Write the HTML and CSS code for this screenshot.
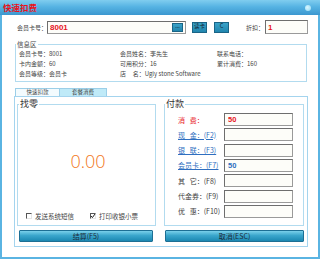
FILE: index.html
```html
<!DOCTYPE html>
<html lang="zh-CN">
<head>
    <meta charset="UTF-8">
    <title>快速扣费</title>
    <link rel="stylesheet" href="styles.css">
</head>
<body>
    <div class="window">
        <div class="titlebar">
            <span class="title">快速扣费</span>
            <span class="close-dot"></span>
        </div>

        <div class="body">
            <!-- card number row -->
            <div class="card-row">
                <span class="card-label">会员卡号：</span>
                <div class="card-input-wrap">
                    <input class="field field-card" value="8001">
                    <button class="btn-mini btn-more">...</button>
                </div>
                <button class="btn-mini btn-read">读卡</button>
                <button class="btn-mini btn-clear">C</button>
                <span class="discount-label">折扣：</span>
                <input class="field field-discount" value="1">
            </div>

            <!-- member info -->
            <fieldset class="info-box">
                <legend>信息区</legend>
                <div class="info-grid">
                    <span>会员卡号：8001</span>
                    <span>会员姓名：李先生</span>
                    <span>联系电话：</span>
                    <span>卡内金额：60</span>
                    <span>可用积分：16</span>
                    <span>累计消费：160</span>
                    <span>会员等级：会员卡</span>
                    <span>店&nbsp;&nbsp;&nbsp;&nbsp;&nbsp;名：Ugly stone Software</span>
                </div>
            </fieldset>

            <div class="tabs">
                <div class="tab">快速扣款</div>
                <div class="tab tab-active">套餐消费</div>
            </div>

            <div class="tab-panel">
                <div class="col col-change">
                    <fieldset class="group change-box">
                        <legend>找零</legend>
                        <div class="change-amount">0.00</div>
                        <div class="checks">
                            <label class="check"><span class="cb"></span>发送系统短信</label>
                            <label class="check"><span class="cb cb-on"><svg viewBox="0 0 6 6" width="6" height="6"><path d="M1 3 L2.4 4.6 L5 1" fill="none" stroke="#222" stroke-width="1"/></svg></span>打印收银小票</label>
                        </div>
                    </fieldset>
                    <button class="btn-big">结算(F5)</button>
                </div>

                <div class="col col-pay">
                    <fieldset class="group pay-box">
                        <legend>付款</legend>
                        <div class="pay-rows">
                            <div class="pay-row"><span class="pay-label pay-red">消&nbsp;&nbsp;&nbsp;费：</span><input class="field field-pay val-red" value="50"></div>
                            <div class="pay-row"><span class="pay-label pay-link">现&nbsp;&nbsp;&nbsp;金：(F2)</span><input class="field field-pay" value=""></div>
                            <div class="pay-row"><span class="pay-label pay-link">银&nbsp;&nbsp;&nbsp;联：(F3)</span><input class="field field-pay" value=""></div>
                            <div class="pay-row"><span class="pay-label pay-link">会员卡：(F7)</span><input class="field field-pay val-blue" value="50"></div>
                            <div class="pay-row"><span class="pay-label">其&nbsp;&nbsp;&nbsp;它：(F8)</span><input class="field field-pay" value=""></div>
                            <div class="pay-row"><span class="pay-label">代金券：(F9)</span><input class="field field-pay" value=""></div>
                            <div class="pay-row"><span class="pay-label">优&nbsp;&nbsp;&nbsp;惠：(F10)</span><input class="field field-pay" value=""></div>
                        </div>
                    </fieldset>
                    <button class="btn-big btn-cancel">取消(ESC)</button>
                </div>
            </div>
        </div>
    </div>
</body>
</html>
```

FILE: styles.css
```css
:root {
    --frame: #5ab4e2;
    --line: #b2dbef;
    --text: #444444;
    --red: #e8141c;
    --blue: #2f6fc0;
}

* {
    margin: 0;
    padding: 0;
    box-sizing: border-box;
}

body {
    font-family: "Noto Sans CJK SC", "Noto Sans", sans-serif;
    font-size: 6.5px;
    color: var(--text);
    background: #ffffff;
}

.window {
    width: 320px;
    height: 259px;
    display: flex;
    flex-direction: column;
    border: 2px solid var(--frame);
    border-top: 0;
}

.titlebar {
    height: 15px;
    margin: 0 -2px;
    padding: 0 9px 0 3px;
    display: flex;
    align-items: center;
    justify-content: space-between;
    background: linear-gradient(#80cdef, #56b3e3 45%, #3b97cf);
}

.title {
    color: var(--red);
    font-size: 8.5px;
    font-weight: 700;
    line-height: 1;
}

.close-dot {
    width: 6px;
    height: 6px;
    border-radius: 50%;
    background: radial-gradient(circle at 40% 40%, #d8f6ff, #8ed8f4);
}

.body {
    flex: 1;
    padding: 5px 10px 0 12px;
    display: flex;
    flex-direction: column;
}

/* top row */
.card-row {
    height: 14px;
    margin-left: 3px;
    display: flex;
    align-items: center;
}

.card-label {
    width: 30px;
    font-size: 6px;
}

.field {
    font-family: "Liberation Sans", Arial, sans-serif;
    font-weight: 700;
    border: 1px solid #9a9a9a;
    border-top-color: #6e6e6e;
    border-left-color: #6e6e6e;
    background: #fdfdf9;
    outline: none;
    padding: 0 2px;
}

.card-input-wrap {
    position: relative;
    width: 139px;
    height: 13px;
}

.field-card {
    width: 100%;
    height: 100%;
    color: var(--red);
    font-size: 8px;
}

.btn-mini {
    font-family: inherit;
    font-size: 5.5px;
    color: #14232e;
    border: 1px solid #1a6486;
    background: linear-gradient(#3aa2c8, #2186ae);
    line-height: 1;
}

.btn-more {
    position: absolute;
    right: 3px;
    top: 2px;
    width: 11px;
    height: 9px;
}

.btn-read {
    width: 15px;
    height: 11px;
    margin-left: 6px;
}

.btn-clear {
    width: 15px;
    height: 11px;
    margin-left: 7px;
}

.discount-label {
    width: 19px;
    margin-left: 17px;
    font-size: 6px;
}

.field-discount {
    width: 43px;
    height: 14px;
    color: var(--red);
    font-size: 8px;
}

/* info area */
.info-box {
    margin: 6px 1px 0;
    border: 1px solid var(--line);
    padding: 1px 3px 2px;
}

.info-box legend {
    margin-left: -3px;
    padding: 0 1px;
    font-size: 6.5px;
    line-height: 8px;
}

.info-grid {
    display: grid;
    grid-template-columns: 101px 97px 1fr;
    line-height: 10px;
    font-size: 6px;
}

/* tabs */
.tabs {
    margin: 6px 0 0 1px;
    display: flex;
}

.tab {
    width: 45px;
    height: 8px;
    border: 1px solid #9ccfe8;
    border-bottom: 0;
    background: #f3fbfe;
    font-size: 5.5px;
    line-height: 7px;
    text-align: center;
}

.tab-active {
    width: 47px;
    border-left: 0;
    background: #bfeaf8;
}

.tab-panel {
    height: 151px;
    border: 1px solid #a4d4ee;
    padding: 1px 3px 4px 2px;
    display: flex;
    gap: 8px;
}

.col {
    display: flex;
    flex-direction: column;
}

.col-change {
    width: 139px;
}

.col-pay {
    flex: 1;
}

.group {
    flex: 1;
    border: 1px solid var(--line);
    display: flex;
    flex-direction: column;
}

.group legend {
    padding: 0 1px;
    font-size: 9px;
    line-height: 12px;
    color: #333333;
}

.change-box legend {
    margin-left: 1px;
}

.change-amount {
    flex: 1;
    display: flex;
    align-items: center;
    justify-content: center;
    padding-left: 3px;
    font-family: "Open Sans", "Noto Sans", sans-serif;
    font-weight: 300;
    font-size: 18px;
    color: #f2771a;
}

.checks {
    height: 8px;
    margin-bottom: 5px;
    padding-left: 8px;
    display: flex;
    align-items: center;
    gap: 16px;
}

.check {
    display: flex;
    align-items: center;
    gap: 3px;
    font-size: 6.5px;
}

.cb {
    width: 6px;
    height: 6px;
    border-top: 1px solid #555555;
    border-left: 1px solid #555555;
    border-right: 1px solid #e6e6e6;
    border-bottom: 1px solid #e6e6e6;
    position: relative;
}

.cb svg {
    position: absolute;
    left: -1px;
    top: -1px;
}

.btn-big {
    height: 12px;
    margin: 4px 3px 0 2px;
    font-family: inherit;
    font-size: 7px;
    color: #1c2a36;
    border: 1px solid #1d6f94;
    border-radius: 1px;
    background: linear-gradient(#7ad0ea, #3aa6cc 45%, #1b88b2);
}

.btn-cancel {
    margin: 4px 0 0 1px;
}

/* payment rows */
.pay-rows {
    padding: 3px 0 0 13px;
    display: flex;
    flex-direction: column;
    gap: 2.33px;
}

.pay-row {
    height: 13px;
    display: flex;
    align-items: center;
}

.pay-label {
    width: 46px;
    font-size: 7px;
    color: #3a3a3a;
    white-space: nowrap;
}

.pay-red {
    color: var(--red);
}

.pay-link {
    color: var(--blue);
    text-decoration: underline;
}

.field-pay {
    width: 69px;
    height: 13px;
    font-size: 7.5px;
    padding: 0 3px;
}

.val-red {
    color: var(--red);
}

.val-blue {
    color: var(--blue);
}
```
